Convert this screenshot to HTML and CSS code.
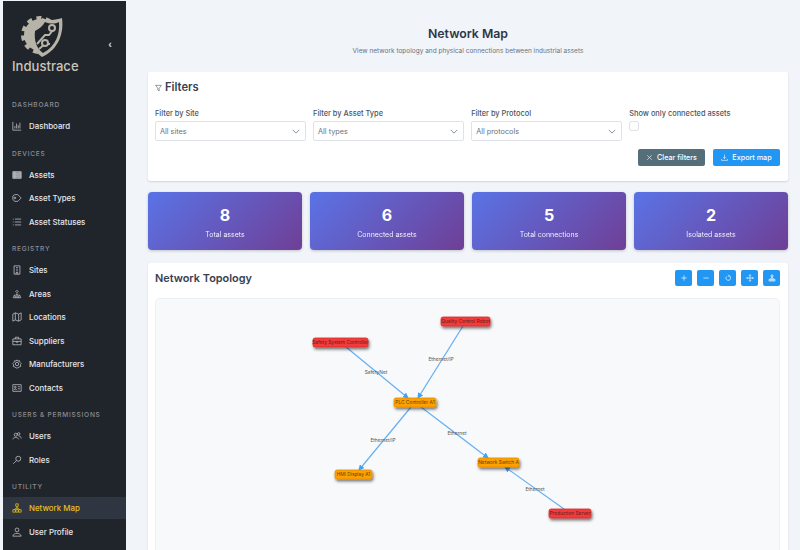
FILE: index.html
```html
<!DOCTYPE html>
<html lang="en">
<head>
    <meta charset="UTF-8">
    <title>Network Map</title>
    <link rel="stylesheet" href="styles.css">
</head>
<body>
    <div class="app">
        <aside class="sidebar">
            <div class="brand">
                <svg class="logo" viewBox="0 0 44 46">
                    <circle cx="19" cy="22" r="12" fill="none" stroke="#b8b3a9" stroke-width="8"/>
                    <circle cx="19" cy="22" r="17" fill="none" stroke="#b8b3a9" stroke-width="4" stroke-dasharray="5 4.5"/>
                    <path d="M21 5 C28 8 35 7 41 5 C43 20 38 36 21 44 C12 38 9 28 11 16 C15 14 19 10 21 5Z" fill="#b8b3a9"/>
                    <path d="M24 9 C29 11 34 11 38 9 C39 21 35 33 22 40 C15 35 13 27 14 18 C18 16 22 13 24 9Z" fill="#20242b"/>
                    <path d="M16 31 L24 22 L28 22 L32 17 M18 36 L24 31 L29 31" fill="none" stroke="#b8b3a9" stroke-width="2"/>
                    <circle cx="31" cy="15" r="3" fill="#20242b" stroke="#b8b3a9" stroke-width="2"/>
                    <circle cx="24" cy="30" r="3" fill="#20242b" stroke="#b8b3a9" stroke-width="2"/>
                </svg>
                <button class="collapse">‹</button>
                <div class="brand-name">Industrace</div>
            </div>

            <div class="nav-label">Dashboard</div>
            <a class="nav-item">
                <svg viewBox="0 0 12 12"><path d="M1 1v10h10M3.500 9V6M5.500 9V3M7.500 9V5M9.500 9V2"/></svg>
                Dashboard
            </a>

            <div class="nav-label">Devices</div>
            <a class="nav-item">
                <svg viewBox="0 0 12 12"><path d="M1 2h10v8H1z" fill="#8d9096"/><path d="M1 4.700h10M1 7.300h10M3.500 2v8"/></svg>
                Assets
            </a>
            <a class="nav-item">
                <svg viewBox="0 0 12 12"><path d="M1 3.500 3 2h4l4 4-4 4H3L1 7.500z M3.500 5a1 1 0 1 0 .01 0"/></svg>
                Asset Types
            </a>
            <a class="nav-item">
                <svg viewBox="0 0 12 12"><path d="M3.500 2.500H11M3.500 6H11M3.500 9.500H11M1 2.500h1M1 6h1M1 9.500h1"/></svg>
                Asset Statuses
            </a>

            <div class="nav-label">Registry</div>
            <a class="nav-item">
                <svg viewBox="0 0 12 12"><path d="M2.500 1h7v10h-7zM5 3h2M5 5h2M5 7h2M5 11V9h2v2"/></svg>
                Sites
            </a>
            <a class="nav-item">
                <svg viewBox="0 0 12 12"><path d="M6 1.500 7.500 3 6 4.500 4.500 3zM3 7l1.500 3.500h-3zM9 7l1.500 3.500h-3zM5 6h2v4.500H5z"/></svg>
                Areas
            </a>
            <a class="nav-item">
                <svg viewBox="0 0 12 12"><path d="M1 2.500 4 1l4 1.500L11 1v8.500L8 11 4 9.500 1 11zM4 1v8.500M8 2.500V11"/></svg>
                Locations
            </a>
            <a class="nav-item">
                <svg viewBox="0 0 12 12"><path d="M1 3.500h10V10.500H1zM4 3.500V1.500h4v2M1 6.500h10M5 6.500v1h2v-1"/></svg>
                Suppliers
            </a>
            <a class="nav-item">
                <svg viewBox="0 0 12 12"><path d="M6 1 7 2.500 9 2l.5 2L11 5.500 10 7l.5 2-2 .5L7 11l-1-.700L5 11 3.500 9.500l-2-.5L2 7 1 5.500 2.500 4 3 2l2 .5z"/><circle cx="6" cy="6" r="2"/></svg>
                Manufacturers
            </a>
            <a class="nav-item">
                <svg viewBox="0 0 12 12"><path d="M1 2h10v8H1zM7 4.500h2.500M7 7h2.500"/><circle cx="4" cy="5" r="1"/><path d="M2.500 8.500C3 6.500 5 6.500 5.500 8.500"/></svg>
                Contacts
            </a>

            <div class="nav-label">Users &amp; Permissions</div>
            <a class="nav-item">
                <svg viewBox="0 0 12 12"><circle cx="4.500" cy="4.500" r="1.800"/><circle cx="8" cy="3.500" r="1.500"/><path d="M1 10C1.500 7 7 7 8 10M8 6c2 0 3 1.500 3 3"/></svg>
                Users
            </a>
            <a class="nav-item">
                <svg viewBox="0 0 12 12"><circle cx="7.500" cy="4.500" r="3"/><path d="M5.500 6.500 1.500 10.500"/></svg>
                Roles
            </a>

            <div class="nav-label">Utility</div>
            <a class="nav-item active">
                <svg viewBox="0 0 12 12"><path d="M4.500 1h3v3h-3zM1 8h3v3H1zM4.500 8h3v3h-3zM8 8h3v3H8zM6 4v4M2.500 8 6 5.500 9.500 8"/></svg>
                Network Map
            </a>
            <a class="nav-item">
                <svg viewBox="0 0 12 12"><circle cx="6" cy="3.500" r="2.300"/><path d="M1 11C1.500 6.500 10.500 6.500 11 11z"/></svg>
                User Profile
            </a>
        </aside>

        <main class="main">
            <header class="page-head">
                <h1>Network Map</h1>
                <p>View network topology and physical connections between industrial assets</p>
            </header>

            <section class="card filters">
                <h2>
                    <svg viewBox="0 0 12 12"><path d="M1 1.500h10L7.200 6.500V11L4.800 9.500v-3z"/></svg>
                    Filters
                </h2>
                <div class="filter-grid">
                    <div>
                        <label>Filter by Site</label>
                        <div class="select">All sites <svg viewBox="0 0 10 6"><path d="M1 1l4 4 4-4"/></svg></div>
                    </div>
                    <div>
                        <label>Filter by Asset Type</label>
                        <div class="select">All types <svg viewBox="0 0 10 6"><path d="M1 1l4 4 4-4"/></svg></div>
                    </div>
                    <div>
                        <label>Filter by Protocol</label>
                        <div class="select">All protocols <svg viewBox="0 0 10 6"><path d="M1 1l4 4 4-4"/></svg></div>
                    </div>
                    <div>
                        <label>Show only connected assets</label>
                        <div class="checkbox"></div>
                    </div>
                </div>
                <div class="filter-actions">
                    <button class="btn btn-grey">
                        <svg viewBox="0 0 12 12"><path d="M2 2l8 8M10 2l-8 8"/></svg>
                        Clear filters
                    </button>
                    <button class="btn btn-blue">
                        <svg viewBox="0 0 12 12"><path d="M6 1v7M3.500 5.500 6 8l2.500-2.500M1 8.500V11h10V8.500"/></svg>
                        Export map
                    </button>
                </div>
            </section>

            <section class="stats">
                <div class="stat"><strong>8</strong><span>Total assets</span></div>
                <div class="stat"><strong>6</strong><span>Connected assets</span></div>
                <div class="stat"><strong>5</strong><span>Total connections</span></div>
                <div class="stat"><strong>2</strong><span>Isolated assets</span></div>
            </section>

            <section class="card topology">
                <div class="topology-head">
                    <h2>Network Topology</h2>
                    <div class="tools">
                        <button class="tool"><svg viewBox="0 0 12 12"><path d="M6 2v8M2 6h8"/></svg></button>
                        <button class="tool"><svg viewBox="0 0 12 12"><path d="M2 6h8"/></svg></button>
                        <button class="tool"><svg viewBox="0 0 12 12"><path d="M6.500 2.500A3.500 3.500 0 1 1 3.500 4M6 1l1.500 1.500L6 4"/></svg></button>
                        <button class="tool"><svg viewBox="0 0 12 12"><path d="M6 1v10M1 6h10M4.500 2.500 6 1l1.500 1.500M4.500 9.500 6 11l1.500-1.500M2.500 4.500 1 6l1.500 1.500M9.500 4.500 11 6 9.500 7.500"/></svg></button>
                        <button class="tool"><svg viewBox="0 0 12 12"><path d="M4.700 1.500h2.600v2.600H4.700zM1.500 8h2.600v2.600H1.500zM4.700 8h2.600v2.600H4.700zM7.900 8h2.600v2.600H7.900zM6 4v4M3 8l3-3 3 3"/></svg></button>
                    </div>
                </div>
                <div class="graph">
                    <svg viewBox="0 0 625 260">
                        <defs>
                            <marker id="arrow" markerWidth="6" markerHeight="6" refX="5" refY="3" orient="auto" markerUnits="userSpaceOnUse">
                                <path d="M0 0 6 3 0 6z" fill="#42a0f5"/>
                            </marker>
                            <filter id="node-shadow" x="-20%" y="-50%" width="150%" height="240%">
                                <feDropShadow dx="1" dy="2" stdDeviation="1.500" flood-color="#000" flood-opacity=".55"/>
                            </filter>
                        </defs>
                        <g class="edges">
                            <line x1="191" y1="49" x2="253" y2="100" marker-end="url(#arrow)"/>
                            <line x1="308" y1="28" x2="263" y2="100" marker-end="url(#arrow)"/>
                            <line x1="256" y1="109" x2="204" y2="172" marker-end="url(#arrow)"/>
                            <line x1="266" y1="109" x2="333" y2="160" marker-end="url(#arrow)"/>
                            <line x1="409" y1="211" x2="350" y2="169" marker-end="url(#arrow)"/>
                        </g>
                        <g class="edge-labels">
                            <text x="221" y="76">SafetyNet</text>
                            <text x="286" y="63">Ethernet/IP</text>
                            <text x="228" y="144">Ethernet/IP</text>
                            <text x="302" y="137">Ethernet</text>
                            <text x="380" y="193">Ethernet</text>
                        </g>
                        <g class="node red"><rect x="286" y="19" width="49" height="9" rx="2"/><text x="310.500" y="25.300">Quality Control Robot</text></g>
                        <g class="node red"><rect x="158" y="40" width="55" height="9" rx="2"/><text x="185.500" y="46.300">Safety System Controller</text></g>
                        <g class="node amber"><rect x="239" y="100" width="42" height="9" rx="2"/><text x="260" y="106.300">PLC Controller A1</text></g>
                        <g class="node amber"><rect x="180" y="172" width="37" height="9" rx="2"/><text x="198.500" y="178.300">HMI Display A1</text></g>
                        <g class="node amber"><rect x="323" y="160" width="41" height="9" rx="2"/><text x="343.500" y="166.300">Network Switch A</text></g>
                        <g class="node red"><rect x="394" y="211" width="42" height="9" rx="2"/><text x="415" y="217.300">Production Server</text></g>
                    </svg>
                </div>
            </section>
        </main>
    </div>
</body>
</html>
```

FILE: styles.css
```css
* {
    box-sizing: border-box;
}
html, body {
    height: 100%;
    margin: 0;
}
body {
    font-family: 'Inter', 'Liberation Sans', sans-serif;
    background-color: #f1f4f9;
    color: #374151;
    overflow: hidden;
}
.app {
    display: flex;
    height: 550px;
    padding-left: 3px;
}

/* sidebar */
.sidebar {
    width: 123px;
    flex-shrink: 0;
    margin-top: 1px;
    background-color: #20242b;
    color: #e5e7eb;
}
.brand {
    position: relative;
    height: 95px;
    padding: 12px 0 0 9px;
}
.logo {
    display: block;
    width: 44px;
    height: 46px;
    margin: 0 0 -1px 9px;
}
.collapse {
    position: absolute;
    top: 37px;
    right: 14px;
    padding: 0;
    background: none;
    border: none;
    color: #d1d5db;
    font-size: 11px;
    font-weight: 700;
}
.brand-name {
    font-size: 13.100px;
    line-height: 16px;
    font-weight: 500;
    color: #c8c5bd;
}
.nav-label {
    height: 10px;
    margin: 11.300px 0 5.200px 9px;
    font-size: 6.600px;
    line-height: 10px;
    font-weight: 500;
    letter-spacing: .75px;
    text-transform: uppercase;
    color: #8b8f96;
}
.brand + .nav-label {
    margin-top: 4.300px;
}
.nav-item {
    display: flex;
    align-items: center;
    gap: 7px;
    height: 22px;
    margin-bottom: 1.500px;
    padding-left: 9px;
    font-size: 7.900px;
    font-weight: 500;
    color: #e5e7eb;
}
.nav-item svg {
    width: 10px;
    height: 10px;
    fill: none;
    stroke: #c5c7ca;
    stroke-width: .9;
}
.nav-item.active {
    background-color: #2f3541;
    color: #e8c21a;
}
.nav-item.active svg {
    stroke: #e8c21a;
}

/* main column */
.main {
    flex: 1;
    padding: 0 12px 0 22px;
    min-width: 0;
}
.page-head {
    height: 72px;
    padding-top: 25px;
    text-align: center;
}
.page-head h1 {
    margin: 0;
    font-size: 12.300px;
    line-height: 17px;
    font-weight: 600;
    color: #2d3748;
}
.page-head p {
    margin: 5px 0 0;
    font-size: 6.500px;
    line-height: 9px;
    color: #6b7280;
}
.card {
    background-color: #fff;
    border-radius: 2px;
    box-shadow: 0 1px 2px rgba(0, 0, 0, 0.14);
}
.filters {
    height: 109px;
    padding: 9px 8px 9px 7px;
}
.filters h2 {
    display: flex;
    align-items: center;
    gap: 3px;
    margin: 0 0 15px;
    font-size: 11.200px;
    line-height: 13px;
    font-weight: 600;
}
.filters h2 svg {
    width: 7px;
    height: 8px;
    fill: none;
    stroke: #4b5563;
    stroke-width: 1;
}
.filter-grid {
    display: grid;
    grid-template-columns: repeat(4, 1fr);
    gap: 7.300px;
}
.filter-grid label {
    display: block;
    height: 12px;
    font-size: 7.400px;
    line-height: 10px;
    font-weight: 500;
    color: #4b5563;
}
.select {
    display: flex;
    align-items: center;
    justify-content: space-between;
    height: 20px;
    padding: 0 5px 0 4px;
    background-color: #fff;
    border: 1px solid #dfe3e8;
    border-radius: 2px;
    font-size: 7.300px;
    color: #6b7280;
}
.select svg {
    width: 8px;
    height: 5px;
    fill: none;
    stroke: #6b7280;
    stroke-width: 1;
}
.checkbox {
    width: 10px;
    height: 10px;
    border: 1px solid #dfe3e8;
    border-radius: 2px;
}
.filter-actions {
    display: flex;
    justify-content: flex-end;
    gap: 8px;
    margin-top: 8px;
}
.btn {
    display: flex;
    align-items: center;
    justify-content: center;
    gap: 4px;
    width: 67px;
    height: 17px;
    padding: 0;
    border: none;
    border-radius: 2px;
    font-family: inherit;
    font-size: 7.200px;
    font-weight: 500;
    color: #fff;
}
.btn svg {
    width: 7px;
    height: 7px;
    fill: none;
    stroke: #fff;
    stroke-width: 1;
}
.btn-grey {
    background-color: #546e7a;
}
.btn-blue {
    background-color: #2196f3;
}

/* stat cards */
.stats {
    display: grid;
    grid-template-columns: repeat(4, 1fr);
    gap: 8px;
    margin-top: 11px;
}
.stat {
    display: flex;
    flex-direction: column;
    align-items: center;
    height: 58px;
    padding-top: 14px;
    border-radius: 4px;
    background: linear-gradient(135deg, #5a73e6 0%, #6f3f96 100%);
    box-shadow: 0 1px 3px rgba(0, 0, 0, 0.2);
    color: #fff;
}
.stat strong {
    font-size: 16px;
    line-height: 18px;
    font-weight: 700;
}
.stat span {
    margin-top: 6px;
    font-size: 7px;
    line-height: 9px;
    opacity: .9;
}

/* topology */
.topology {
    margin-top: 13px;
    height: 300px;
    padding: 7px 8px 7px 7px;
}
.topology-head {
    display: flex;
    align-items: center;
    justify-content: space-between;
    height: 16px;
}
.topology-head h2 {
    margin: 0;
    font-size: 10.900px;
    font-weight: 600;
    color: #374151;
}
.tools {
    display: flex;
    gap: 5px;
}
.tool {
    display: flex;
    align-items: center;
    justify-content: center;
    width: 17px;
    height: 16px;
    padding: 0;
    border: none;
    border-radius: 2px;
    background-color: #2196f3;
}
.tool svg {
    width: 8px;
    height: 8px;
    fill: none;
    stroke: #fff;
    stroke-width: 1;
}
.graph {
    height: 270px;
    margin-top: 12px;
    background-color: #f8f9fb;
    border: 1px solid #eef0f4;
    border-radius: 5px;
}
.graph svg {
    display: block;
    width: 625px;
    height: 260px;
    margin: -1px;
}
.edges line {
    stroke: #64b0f4;
    stroke-width: 1.200;
}
.edge-labels text {
    font-size: 4.800px;
    text-anchor: middle;
    fill: #555;
}
.node rect {
    stroke-width: .8;
    filter: url(#node-shadow);
}
.node text {
    font-size: 4.800px;
    text-anchor: middle;
    fill: #5a4000;
}
.node.red rect {
    fill: #f43b3b;
    stroke: #d32f2f;
}
.node.red text {
    fill: #5c1d1d;
}
.node.amber rect {
    fill: #ffa000;
    stroke: #e08e00;
}
```
